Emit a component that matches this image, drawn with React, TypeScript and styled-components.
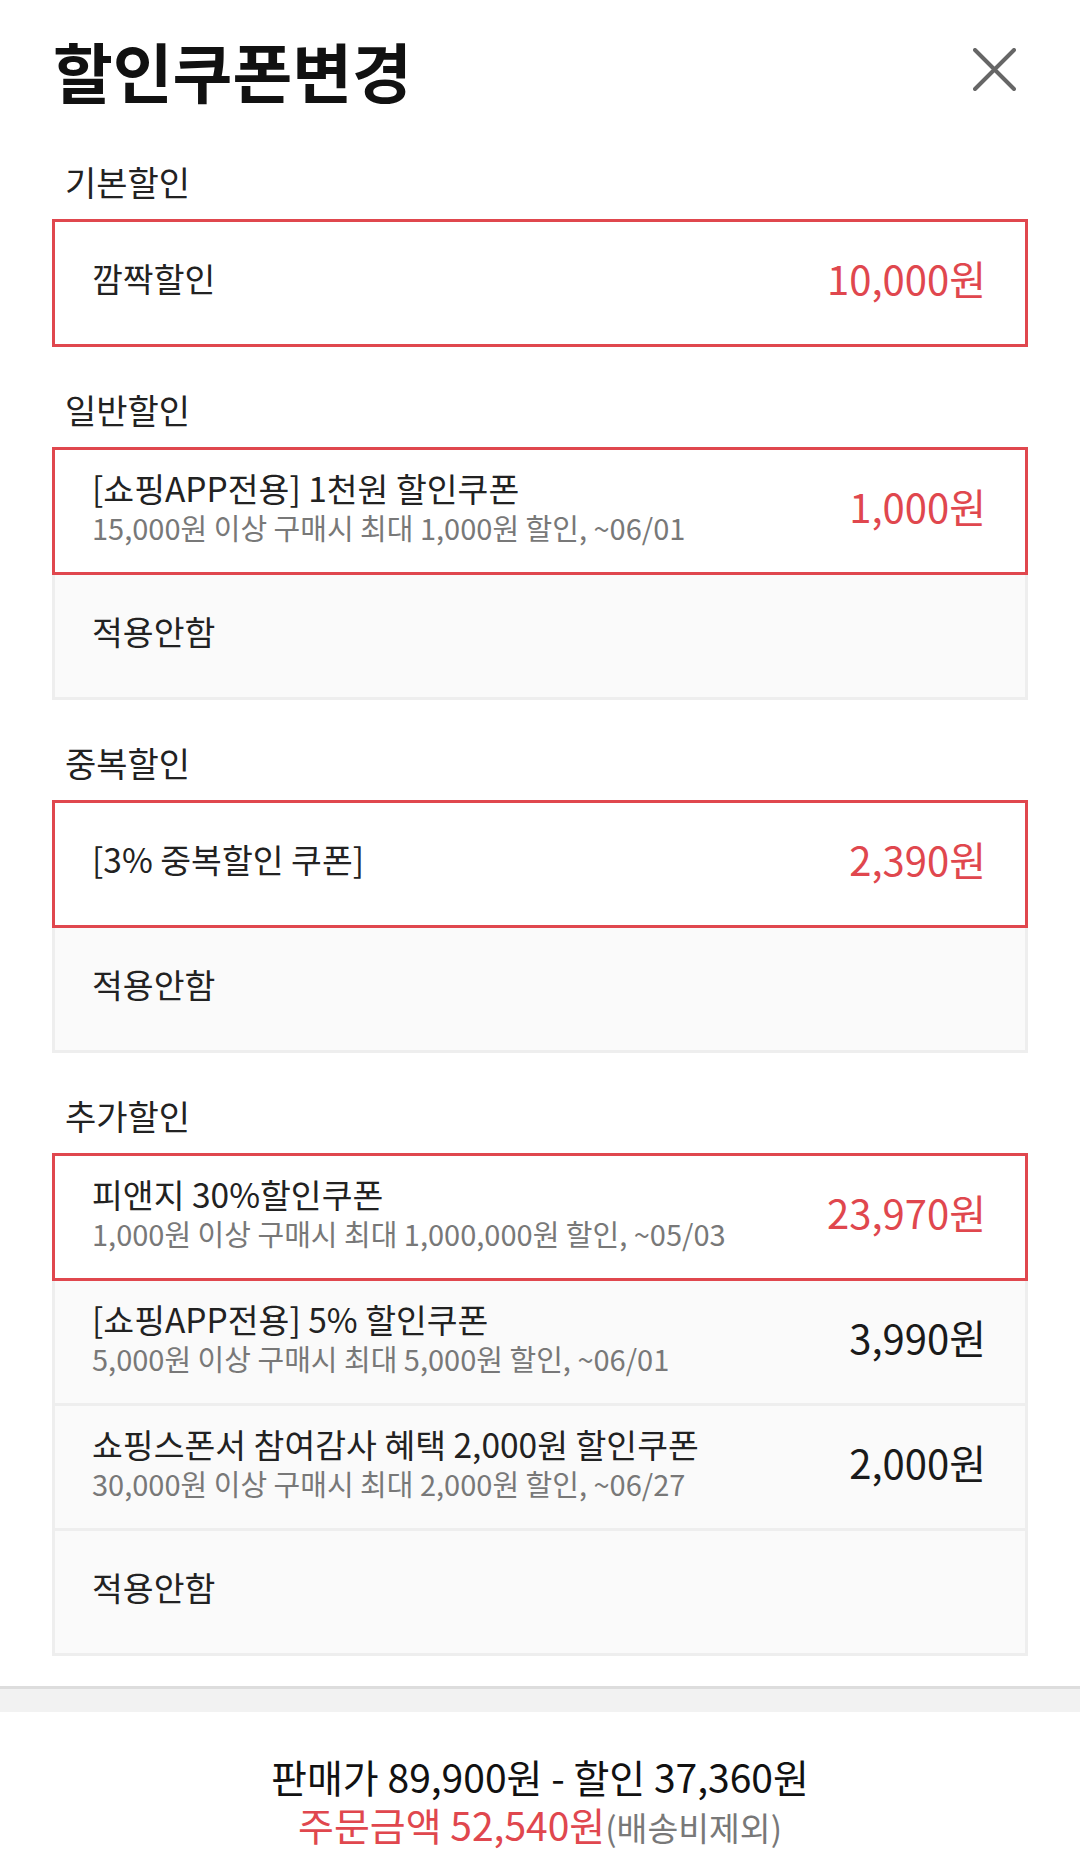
import React from 'react';
import styled, { createGlobalStyle } from 'styled-components';

const GlobalStyle = createGlobalStyle`
  html, body {
    margin: 0;
    padding: 0;
    background: #ffffff;
  }
  body {
    font-family: "Noto Sans CJK KR", "Noto Sans", sans-serif;
    color: #222222;
    -webkit-font-smoothing: antialiased;
  }
  * { box-sizing: border-box; }
`;

const RED = '#e0474e';

type Coupon = {
  title: string;
  desc?: string;
  price?: string;
  selected?: boolean;
};

type Section = {
  label: string;
  items: Coupon[];
};

const sections: Section[] = [
  {
    label: '기본할인',
    items: [{ title: '깜짝할인', price: '10,000원', selected: true }],
  },
  {
    label: '일반할인',
    items: [
      {
        title: '[쇼핑APP전용] 1천원 할인쿠폰',
        desc: '15,000원 이상 구매시 최대 1,000원 할인, ~06/01',
        price: '1,000원',
        selected: true,
      },
      { title: '적용안함' },
    ],
  },
  {
    label: '중복할인',
    items: [
      { title: '[3% 중복할인 쿠폰]', price: '2,390원', selected: true },
      { title: '적용안함' },
    ],
  },
  {
    label: '추가할인',
    items: [
      {
        title: '피앤지 30%할인쿠폰',
        desc: '1,000원 이상 구매시 최대 1,000,000원 할인, ~05/03',
        price: '23,970원',
        selected: true,
      },
      {
        title: '[쇼핑APP전용] 5% 할인쿠폰',
        desc: '5,000원 이상 구매시 최대 5,000원 할인, ~06/01',
        price: '3,990원',
      },
      {
        title: '쇼핑스폰서 참여감사 혜택 2,000원 할인쿠폰',
        desc: '30,000원 이상 구매시 최대 2,000원 할인, ~06/27',
        price: '2,000원',
      },
      { title: '적용안함' },
    ],
  },
];

const Page = styled.div`
  width: 1080px;
  min-height: 1869px;
  display: flex;
  flex-direction: column;
  background: #ffffff;
`;

const Header = styled.header`
  height: 119px;
  padding: 20px 64px 0 53px;
  display: flex;
  align-items: center;
  justify-content: space-between;
`;

const Title = styled.h1`
  margin: 0;
  font-size: 65px;
  font-weight: 700;
  line-height: 76px;
  color: #111111;
`;

const CloseButton = styled.button`
  width: 43px;
  height: 43px;
  padding: 0;
  border: 0;
  background: transparent;
  display: flex;
  align-items: center;
  justify-content: center;
  cursor: pointer;
`;

const SectionBlock = styled.section`
  display: flex;
  flex-direction: column;
  padding: 0 52px;
`;

const SectionLabel = styled.h2`
  margin: 41px 0 15px;
  padding-left: 13px;
  font-size: 34px;
  font-weight: 400;
  line-height: 44px;
  color: #222222;
`;

const List = styled.ul`
  list-style: none;
  margin: 0;
  padding: 0;
  display: flex;
  flex-direction: column;
`;

const Item = styled.li<{ $selected?: boolean }>`
  position: relative;
  height: 128px;
  padding: 12px 39px 22px 37px;
  display: flex;
  align-items: center;
  justify-content: space-between;
  gap: 20px;
  border: 3px solid ${(p) => (p.$selected ? RED : '#eeeeee')};
  background: ${(p) => (p.$selected ? '#ffffff' : '#fafafa')};
  z-index: ${(p) => (p.$selected ? 1 : 0)};

  & + & {
    margin-top: -3px;
  }
`;

const TextCol = styled.div`
  display: flex;
  flex-direction: column;
  min-width: 0;
`;

const ItemTitle = styled.div`
  font-size: 33.5px;
  line-height: 42px;
  color: #222222;
  white-space: nowrap;
`;

const ItemDesc = styled.div`
  font-size: 29px;
  line-height: 36px;
  color: #787878;
  white-space: nowrap;
`;

const Price = styled.div<{ $selected?: boolean }>`
  font-size: 40px;
  line-height: 46px;
  color: ${(p) => (p.$selected ? RED : '#1a1a1a')};
  white-space: nowrap;
  flex-shrink: 0;
`;

const Divider = styled.div`
  margin-top: 30px;
  height: 26px;
  border-top: 3px solid #dddddd;
  background: #f2f2f2;
`;

const Footer = styled.footer`
  padding: 40px 0 22px;
  text-align: center;
  display: flex;
  flex-direction: column;
  align-items: center;
`;

const Summary = styled.div`
  font-size: 39px;
  line-height: 48px;
  color: #111111;
  white-space: nowrap;
`;

const Total = styled.div`
  font-size: 39px;
  line-height: 48px;
  color: ${RED};
  white-space: nowrap;
`;

const Note = styled.span`
  font-size: 33.5px;
  color: #787878;
`;

function CloseIcon() {
  return (
    <svg width="43" height="43" viewBox="0 0 43 43" fill="none">
      <path
        d="M2 2 L41 41 M41 2 L2 41"
        stroke="#666666"
        strokeWidth="4"
        strokeLinecap="round"
      />
    </svg>
  );
}

export default function App() {
  return (
    <>
      <GlobalStyle />
      <Page>
        <Header>
          <Title>할인쿠폰변경</Title>
          <CloseButton aria-label="닫기">
            <CloseIcon />
          </CloseButton>
        </Header>

        {sections.map((section) => (
          <SectionBlock key={section.label}>
            <SectionLabel>{section.label}</SectionLabel>
            <List>
              {section.items.map((item, i) => (
                <Item key={i} $selected={item.selected}>
                  <TextCol>
                    <ItemTitle>{item.title}</ItemTitle>
                    {item.desc && <ItemDesc>{item.desc}</ItemDesc>}
                  </TextCol>
                  {item.price && (
                    <Price $selected={item.selected}>{item.price}</Price>
                  )}
                </Item>
              ))}
            </List>
          </SectionBlock>
        ))}

        <Divider />

        <Footer>
          <Summary>판매가 89,900원 - 할인 37,360원</Summary>
          <Total>
            주문금액 52,540원<Note>(배송비제외)</Note>
          </Total>
        </Footer>
      </Page>
    </>
  );
}
